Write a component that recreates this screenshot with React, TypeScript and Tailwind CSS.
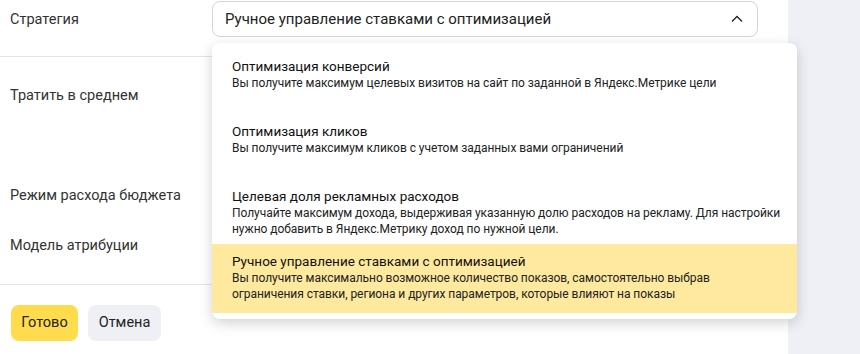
import React from "react";

const options = [
  {
    title: "Оптимизация конверсий",
    lines: ["Вы получите максимум целевых визитов на сайт по заданной в Яндекс.Метрике цели"],
  },
  {
    title: "Оптимизация кликов",
    lines: ["Вы получите максимум кликов с учетом заданных вами ограничений"],
  },
  {
    title: "Целевая доля рекламных расходов",
    lines: [
      "Получайте максимум дохода, выдерживая указанную долю расходов на рекламу. Для настройки",
      "нужно добавить в Яндекс.Метрику доход по нужной цели.",
    ],
  },
  {
    title: "Ручное управление ставками с оптимизацией",
    lines: [
      "Вы получите максимально возможное количество показов, самостоятельно выбрав",
      "ограничения ставки, региона и других параметров, которые влияют на показы",
    ],
    active: true,
  },
];

const font = { fontFamily: "Roboto, 'Noto Sans', sans-serif" };

export default function App() {
  return (
    <div className="flex h-[354px] w-[860px] overflow-hidden bg-white text-[#222]" style={font}>
      <div className="relative w-[788px]">
        <div className="flex h-[57px] border-b border-[#e3e4e8]">
          <div className="w-[212px] pl-[10px] pt-[10px] text-[14.5px] leading-[20px] text-[#333]">Стратегия</div>
          <div className="mt-px flex h-[36px] w-[546px] items-center justify-between rounded-lg border border-[#d4d5d9] pl-[12px] pr-[12px] text-[15px]">
            <span>Ручное управление ставками с оптимизацией</span>
            <svg width="12" height="8" viewBox="0 0 12 8" className="mr-[2px]">
              <path d="M1 6.5 6 1.5l5 5" fill="none" stroke="#222" strokeWidth="1.3" />
            </svg>
          </div>
        </div>

        <div className="flex h-[116px]">
          <div className="w-[212px] pl-[10px] pt-[29px] text-[14.5px] leading-[20px] text-[#333]">Тратить в среднем</div>
          <div className="mt-[20px] h-[52px] w-[200px] rounded-lg border border-[#d4d5d9]" />
        </div>

        <div className="flex h-[46px] items-center">
          <div className="w-[212px] pl-[10px] text-[14.5px] leading-[20px] text-[#333]">Режим расхода бюджета</div>
          <div className="h-[30px] w-[200px] rounded-lg border border-[#d4d5d9]" />
        </div>

        <div className="flex h-[66px] border-b border-[#e3e4e8]">
          <div className="w-[212px] pl-[10px] pt-[17px] text-[14.5px] leading-[20px] text-[#333]">Модель атрибуции</div>
          <div className="mt-[13px] h-[28px] w-[200px] rounded-lg border border-[#d4d5d9]" />
        </div>

        <div className="flex gap-[10px] pl-[11px] pt-[20px]">
          <button className="h-[36px] w-[67px] rounded-lg bg-[#ffdb4d] text-[14.5px] text-[#222]">Готово</button>
          <button className="h-[36px] w-[73px] rounded-lg bg-[#eef0f6] text-[14.5px] text-[#222]">Отмена</button>
        </div>

        <div className="absolute left-[212px] top-[43px] w-[585px] overflow-hidden rounded-lg bg-white py-[6px] shadow-[0_4px_14px_rgba(0,0,0,0.18)]">
          {options.map((o) => (
            <div
              key={o.title}
              className={
                "whitespace-nowrap px-[20px] " +
                (o.active ? "bg-[#fee99e] pt-[9px] pb-[11px]" : "h-[65px] pt-[9px]")
              }
            >
              <div className="text-[13.5px] leading-[17px] text-[#111]">{o.title}</div>
              {o.lines.map((l) => (
                <div key={l} className="text-[12px] leading-[16px] tracking-[-0.05px] text-[#222]">
                  {l}
                </div>
              ))}
            </div>
          ))}
        </div>
      </div>
      <div className="flex-1 bg-[#eef0f5]" />
    </div>
  );
}
